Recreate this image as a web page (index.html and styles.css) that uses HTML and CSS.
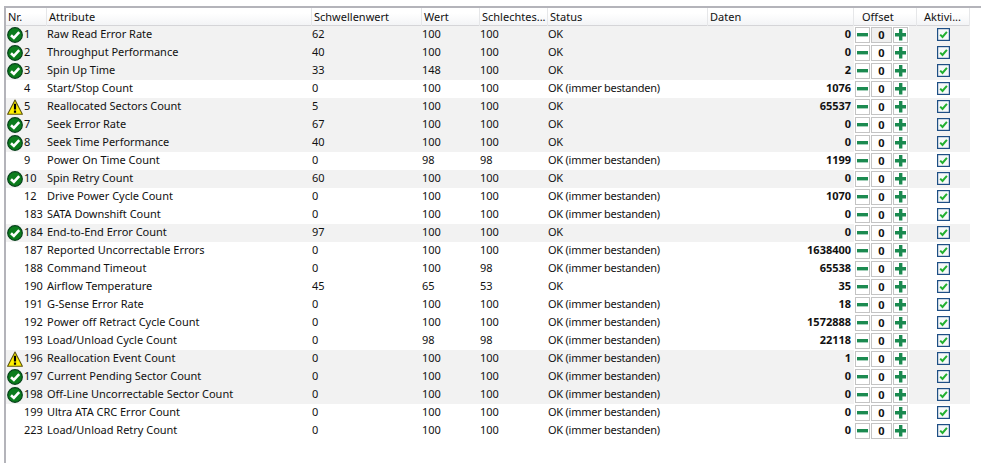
FILE: index.html
```html
<!DOCTYPE html>
<html lang="de">
<head>
<meta charset="utf-8">
<title>SMART</title>
<link rel="stylesheet" href="styles.css">
</head>
<body>
<svg class="defs" width="0" height="0" aria-hidden="true">
  <symbol id="ok" viewBox="0 0 16 16">
    <circle cx="8" cy="8" r="7.3" fill="#0b7c1c" stroke="#06401a" stroke-width="1.2"/>
    <path d="M4 8.2 L6.9 11 L12.2 5.2" fill="none" stroke="#fff" stroke-width="2.6"/>
  </symbol>
  <symbol id="warn" viewBox="0 0 16 16">
    <path d="M8 1 L15.4 15.2 H0.6 Z" fill="#fff000" stroke="#5c5410" stroke-width="1.1" stroke-linejoin="round"/>
    <path d="M8 4.8 V10.4 M8 11.6 V13.8" stroke="#000" stroke-width="2.2" fill="none"/>
  </symbol>
  <symbol id="check" viewBox="0 0 13 13">
    <rect x="0.6" y="0.6" width="11.8" height="11.8" fill="#f6f8f9" stroke="#1e4f85" stroke-width="1.2"/>
    <path d="M3.2 6.6 L5.5 9 L9.9 3.8" fill="none" stroke="#22b030" stroke-width="2"/>
  </symbol>
  <symbol id="minus" viewBox="0 0 13 14">
    <rect x="1" y="5" width="11" height="3.4" fill="#1b8a50"/>
  </symbol>
  <symbol id="plus" viewBox="0 0 13 14">
    <path d="M5 1 H8.4 V5 H12 V8.4 H8.4 V12.5 H5 V8.4 H1 V5 H5 Z" fill="#1b8a50"/>
  </symbol>
</svg>
<div class="grid">
  <div class="head">
    <div class="h">Nr.</div><div class="h">Attribute</div><div class="h">Schwellenwert</div><div class="h">Wert</div><div class="h">Schlechtes...</div><div class="h">Status</div><div class="h">Daten</div><div class="h h-off">Offset</div><div class="h h-act">Aktivi...</div>
  </div>

  <div class="row hi"><div class="nr"><svg class="ic"><use href="#ok"/></svg><span>1</span></div><div>Raw Read Error Rate</div><div>62</div><div>100</div><div>100</div><div class="st">OK</div><div class="data">0</div><div class="off"><span class="btn"><svg><use href="#minus"/></svg></span><span class="val focus">0</span><span class="btn"><svg><use href="#plus"/></svg></span></div><div class="act"><svg class="cb"><use href="#check"/></svg></div></div>
  <div class="row hi"><div class="nr"><svg class="ic"><use href="#ok"/></svg><span>2</span></div><div>Throughput Performance</div><div>40</div><div>100</div><div>100</div><div class="st">OK</div><div class="data">0</div><div class="off"><span class="btn"><svg><use href="#minus"/></svg></span><span class="val">0</span><span class="btn"><svg><use href="#plus"/></svg></span></div><div class="act"><svg class="cb"><use href="#check"/></svg></div></div>
  <div class="row hi"><div class="nr"><svg class="ic"><use href="#ok"/></svg><span>3</span></div><div>Spin Up Time</div><div>33</div><div>148</div><div>100</div><div class="st">OK</div><div class="data">2</div><div class="off"><span class="btn"><svg><use href="#minus"/></svg></span><span class="val">0</span><span class="btn"><svg><use href="#plus"/></svg></span></div><div class="act"><svg class="cb"><use href="#check"/></svg></div></div>
  <div class="row"><div class="nr"><span class="noic">4</span></div><div>Start/Stop Count</div><div>0</div><div>100</div><div>100</div><div class="st">OK (immer bestanden)</div><div class="data">1076</div><div class="off"><span class="btn"><svg><use href="#minus"/></svg></span><span class="val">0</span><span class="btn"><svg><use href="#plus"/></svg></span></div><div class="act"><svg class="cb"><use href="#check"/></svg></div></div>
  <div class="row hi"><div class="nr"><svg class="ic"><use href="#warn"/></svg><span>5</span></div><div>Reallocated Sectors Count</div><div>5</div><div>100</div><div>100</div><div class="st">OK</div><div class="data">65537</div><div class="off"><span class="btn"><svg><use href="#minus"/></svg></span><span class="val">0</span><span class="btn"><svg><use href="#plus"/></svg></span></div><div class="act"><svg class="cb"><use href="#check"/></svg></div></div>
  <div class="row hi"><div class="nr"><svg class="ic"><use href="#ok"/></svg><span>7</span></div><div>Seek Error Rate</div><div>67</div><div>100</div><div>100</div><div class="st">OK</div><div class="data">0</div><div class="off"><span class="btn"><svg><use href="#minus"/></svg></span><span class="val">0</span><span class="btn"><svg><use href="#plus"/></svg></span></div><div class="act"><svg class="cb"><use href="#check"/></svg></div></div>
  <div class="row hi"><div class="nr"><svg class="ic"><use href="#ok"/></svg><span>8</span></div><div>Seek Time Performance</div><div>40</div><div>100</div><div>100</div><div class="st">OK</div><div class="data">0</div><div class="off"><span class="btn"><svg><use href="#minus"/></svg></span><span class="val">0</span><span class="btn"><svg><use href="#plus"/></svg></span></div><div class="act"><svg class="cb"><use href="#check"/></svg></div></div>
  <div class="row"><div class="nr"><span class="noic">9</span></div><div>Power On Time Count</div><div>0</div><div>98</div><div>98</div><div class="st">OK (immer bestanden)</div><div class="data">1199</div><div class="off"><span class="btn"><svg><use href="#minus"/></svg></span><span class="val">0</span><span class="btn"><svg><use href="#plus"/></svg></span></div><div class="act"><svg class="cb"><use href="#check"/></svg></div></div>
  <div class="row hi"><div class="nr"><svg class="ic"><use href="#ok"/></svg><span>10</span></div><div>Spin Retry Count</div><div>60</div><div>100</div><div>100</div><div class="st">OK</div><div class="data">0</div><div class="off"><span class="btn"><svg><use href="#minus"/></svg></span><span class="val">0</span><span class="btn"><svg><use href="#plus"/></svg></span></div><div class="act"><svg class="cb"><use href="#check"/></svg></div></div>
  <div class="row"><div class="nr"><span class="noic">12</span></div><div>Drive Power Cycle Count</div><div>0</div><div>100</div><div>100</div><div class="st">OK (immer bestanden)</div><div class="data">1070</div><div class="off"><span class="btn"><svg><use href="#minus"/></svg></span><span class="val">0</span><span class="btn"><svg><use href="#plus"/></svg></span></div><div class="act"><svg class="cb"><use href="#check"/></svg></div></div>
  <div class="row"><div class="nr"><span class="noic">183</span></div><div>SATA Downshift Count</div><div>0</div><div>100</div><div>100</div><div class="st">OK (immer bestanden)</div><div class="data">0</div><div class="off"><span class="btn"><svg><use href="#minus"/></svg></span><span class="val">0</span><span class="btn"><svg><use href="#plus"/></svg></span></div><div class="act"><svg class="cb"><use href="#check"/></svg></div></div>
  <div class="row hi"><div class="nr"><svg class="ic"><use href="#ok"/></svg><span>184</span></div><div>End-to-End Error Count</div><div>97</div><div>100</div><div>100</div><div class="st">OK</div><div class="data">0</div><div class="off"><span class="btn"><svg><use href="#minus"/></svg></span><span class="val">0</span><span class="btn"><svg><use href="#plus"/></svg></span></div><div class="act"><svg class="cb"><use href="#check"/></svg></div></div>
  <div class="row"><div class="nr"><span class="noic">187</span></div><div>Reported Uncorrectable Errors</div><div>0</div><div>100</div><div>100</div><div class="st">OK (immer bestanden)</div><div class="data">1638400</div><div class="off"><span class="btn"><svg><use href="#minus"/></svg></span><span class="val">0</span><span class="btn"><svg><use href="#plus"/></svg></span></div><div class="act"><svg class="cb"><use href="#check"/></svg></div></div>
  <div class="row"><div class="nr"><span class="noic">188</span></div><div>Command Timeout</div><div>0</div><div>100</div><div>98</div><div class="st">OK (immer bestanden)</div><div class="data">65538</div><div class="off"><span class="btn"><svg><use href="#minus"/></svg></span><span class="val">0</span><span class="btn"><svg><use href="#plus"/></svg></span></div><div class="act"><svg class="cb"><use href="#check"/></svg></div></div>
  <div class="row"><div class="nr"><span class="noic">190</span></div><div>Airflow Temperature</div><div>45</div><div>65</div><div>53</div><div class="st">OK</div><div class="data">35</div><div class="off"><span class="btn"><svg><use href="#minus"/></svg></span><span class="val">0</span><span class="btn"><svg><use href="#plus"/></svg></span></div><div class="act"><svg class="cb"><use href="#check"/></svg></div></div>
  <div class="row"><div class="nr"><span class="noic">191</span></div><div>G-Sense Error Rate</div><div>0</div><div>100</div><div>100</div><div class="st">OK (immer bestanden)</div><div class="data">18</div><div class="off"><span class="btn"><svg><use href="#minus"/></svg></span><span class="val">0</span><span class="btn"><svg><use href="#plus"/></svg></span></div><div class="act"><svg class="cb"><use href="#check"/></svg></div></div>
  <div class="row"><div class="nr"><span class="noic">192</span></div><div>Power off Retract Cycle Count</div><div>0</div><div>100</div><div>100</div><div class="st">OK (immer bestanden)</div><div class="data">1572888</div><div class="off"><span class="btn"><svg><use href="#minus"/></svg></span><span class="val">0</span><span class="btn"><svg><use href="#plus"/></svg></span></div><div class="act"><svg class="cb"><use href="#check"/></svg></div></div>
  <div class="row"><div class="nr"><span class="noic">193</span></div><div>Load/Unload Cycle Count</div><div>0</div><div>98</div><div>98</div><div class="st">OK (immer bestanden)</div><div class="data">22118</div><div class="off"><span class="btn"><svg><use href="#minus"/></svg></span><span class="val">0</span><span class="btn"><svg><use href="#plus"/></svg></span></div><div class="act"><svg class="cb"><use href="#check"/></svg></div></div>
  <div class="row hi"><div class="nr"><svg class="ic"><use href="#warn"/></svg><span>196</span></div><div>Reallocation Event Count</div><div>0</div><div>100</div><div>100</div><div class="st">OK (immer bestanden)</div><div class="data">1</div><div class="off"><span class="btn"><svg><use href="#minus"/></svg></span><span class="val">0</span><span class="btn"><svg><use href="#plus"/></svg></span></div><div class="act"><svg class="cb"><use href="#check"/></svg></div></div>
  <div class="row hi"><div class="nr"><svg class="ic"><use href="#ok"/></svg><span>197</span></div><div>Current Pending Sector Count</div><div>0</div><div>100</div><div>100</div><div class="st">OK (immer bestanden)</div><div class="data">0</div><div class="off"><span class="btn"><svg><use href="#minus"/></svg></span><span class="val">0</span><span class="btn"><svg><use href="#plus"/></svg></span></div><div class="act"><svg class="cb"><use href="#check"/></svg></div></div>
  <div class="row hi"><div class="nr"><svg class="ic"><use href="#ok"/></svg><span>198</span></div><div>Off-Line Uncorrectable Sector Count</div><div>0</div><div>100</div><div>100</div><div class="st">OK (immer bestanden)</div><div class="data">0</div><div class="off"><span class="btn"><svg><use href="#minus"/></svg></span><span class="val">0</span><span class="btn"><svg><use href="#plus"/></svg></span></div><div class="act"><svg class="cb"><use href="#check"/></svg></div></div>
  <div class="row"><div class="nr"><span class="noic">199</span></div><div>Ultra ATA CRC Error Count</div><div>0</div><div>100</div><div>100</div><div class="st">OK (immer bestanden)</div><div class="data">0</div><div class="off"><span class="btn"><svg><use href="#minus"/></svg></span><span class="val">0</span><span class="btn"><svg><use href="#plus"/></svg></span></div><div class="act"><svg class="cb"><use href="#check"/></svg></div></div>
  <div class="row"><div class="nr"><span class="noic">223</span></div><div>Load/Unload Retry Count</div><div>0</div><div>100</div><div>100</div><div class="st">OK (immer bestanden)</div><div class="data">0</div><div class="off"><span class="btn"><svg><use href="#minus"/></svg></span><span class="val">0</span><span class="btn"><svg><use href="#plus"/></svg></span></div><div class="act"><svg class="cb"><use href="#check"/></svg></div></div>
</div>
</body>
</html>
```

FILE: styles.css
```css
html, body {
  margin: 0;
  padding: 0;
  height: 100%;
  background: #fff;
  overflow: hidden;
}
body {
  padding: 6px 0 0 4px;
  box-sizing: border-box;
  font: 11px/16px "Noto Sans", sans-serif;
  letter-spacing: -0.02px;
  color: #111;
}
.defs { position: absolute; }
.grid {
  height: 100%;
  border-top: 2px solid #b4b4ba;
  border-left: 2px solid #b4b4ba;
  box-sizing: border-box;
}
.head, .row {
  display: grid;
  grid-template-columns: 41px 265px 110px 58px 68px 160px 146px 63px 53px;
  width: 964px;
}
.head {
  height: 17px;
  background: linear-gradient(#fff 0, #fff 30%, #f3f4f6 100%);
  border-bottom: 1px solid #d5d5d8;
  line-height: 18px;
}
.h {
  padding-left: 2px;
  box-shadow: inset -1px 0 0 #e6e7e9;
  white-space: nowrap;
  letter-spacing: 0;
}
.h-off { padding-left: 8px; }
.h-act { padding-left: 7px; }
.row { height: 18px; }
.row > div { white-space: nowrap; }
.hi { background: #f2f2f2; }
.st { letter-spacing: -0.25px; }
.nr {
  display: flex;
  align-items: flex-start;
  gap: 1px;
  padding-left: 1px;
}
.ic { width: 16px; height: 16px; flex: none; margin-top: 1px; }
.noic { margin-left: 17px; }
.data {
  font-weight: 700;
  text-align: right;
  padding-right: 3px;
}
.off {
  display: flex;
  gap: 1px;
  padding: 1px 0 0 1px;
  box-sizing: border-box;
  background: #fff;
  width: 55px;
}
.btn, .val {
  height: 14px;
  border: 1px solid #c4c4c4;
  background: #fff;
  text-align: center;
  line-height: 14px;
}
.btn {
  display: block;
  width: 13px;
}
.btn svg { display: block; width: 13px; height: 14px; }
.val {
  width: 19px;
  font-weight: 700;
}
.focus { background: #f0f0f0; }
.act {
  display: flex;
  align-items: flex-start;
  justify-content: center;
  padding-top: 2px;
}
.cb { width: 13px; height: 13px; }
```
